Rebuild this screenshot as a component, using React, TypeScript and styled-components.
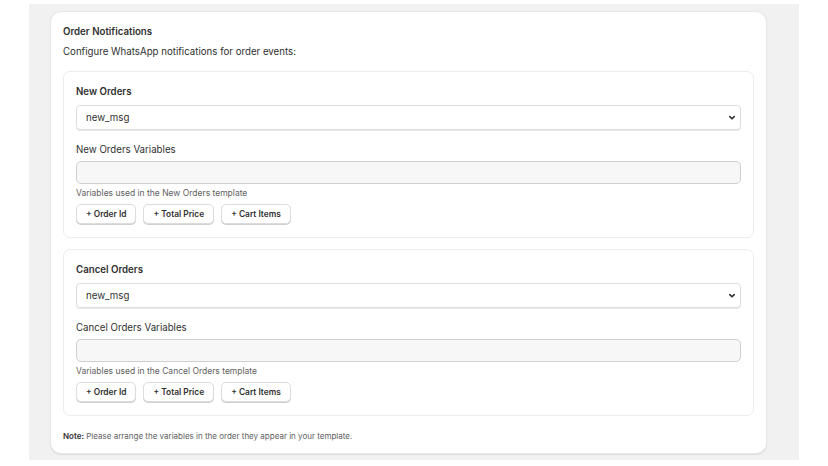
import React from 'react';
import styled, { createGlobalStyle } from 'styled-components';

const Global = createGlobalStyle`
  html, body { margin: 0; padding: 0; background: #ffffff; }
  body { font-family: Inter, "Noto Sans", sans-serif; color: #303030; }
`;

const Page = styled.div`
  margin: 4px 29px 0 29px;
  width: 770px;
  background: #f1f1f1;
  padding: 8px 33px 7px 22px;
  box-sizing: border-box;
`;

const Card = styled.div`
  background: #ffffff;
  border-radius: 10px;
  box-shadow: 0 0 0 1px #e8e8e8, 0 1px 1px 1px #dcdcdc;
  padding: 14px 12px 12px 12px;
  display: flex;
  flex-direction: column;
`;

const Title = styled.h2`
  margin: 0;
  font-size: 9.7px;
  font-weight: 600;
  line-height: 12px;
  color: #303030;
`;

const Intro = styled.p`
  margin: 8px 0 13px 0;
  font-size: 9.7px;
  line-height: 12px;
  color: #303030;
`;

const Section = styled.section`
  border: 1px solid #ececec;
  border-radius: 7px;
  padding: 14px 12px 13px 12px;
  display: flex;
  flex-direction: column;
  & + & { margin-top: 11px; }
`;

const SectionTitle = styled.h3`
  margin: 0 0 7px 0;
  font-size: 9.7px;
  font-weight: 600;
  line-height: 12px;
`;

const SelectBox = styled.div`
  height: 25px;
  border: 1px solid #dedede;
  border-radius: 4px;
  box-shadow: 0 1px 0 #e6e6e6;
  box-sizing: border-box;
  display: flex;
  align-items: center;
  justify-content: space-between;
  padding: 0 4px 0 9px;
  font-size: 9.7px;
  color: #303030;
`;

const Label = styled.div`
  margin: 14px 0 5px 0;
  font-size: 9.7px;
  line-height: 12px;
`;

const VarInput = styled.div`
  height: 23px;
  border: 1px solid #cfcfcf;
  border-radius: 5px;
  background: #f7f7f7;
  box-sizing: border-box;
`;

const Help = styled.div`
  margin: 4px 0 6px 0;
  font-size: 8.5px;
  line-height: 10px;
  color: #616161;
`;

const Chips = styled.div`
  display: flex;
  gap: 7px;
`;

const Chip = styled.button`
  font-family: Inter, "Noto Sans", sans-serif;
  height: 20px;
  padding: 0 9px;
  background: #ffffff;
  border: 1px solid #dcdcdc;
  border-radius: 5px;
  box-shadow: 0 1px 0 #cfcfcf;
  font-size: 8.4px;
  font-weight: 600;
  color: #303030;
  cursor: pointer;
`;

const Note = styled.p`
  margin: 15px 0 0 0;
  font-size: 8px;
  line-height: 10px;
  color: #616161;
  b { font-weight: 600; color: #303030; }
`;

const Chevron = () => (
  <svg width="8" height="6" viewBox="0 0 8 6">
    <path d="M1.8 1.6 L4 3.8 L6.2 1.6" fill="none" stroke="#303030" strokeWidth="1.6" strokeLinecap="round" strokeLinejoin="round" />
  </svg>
);

const OrderBlock: React.FC<{ name: string }> = ({ name }) => (
  <Section>
    <SectionTitle>{name}</SectionTitle>
    <SelectBox>
      <span>new_msg</span>
      <Chevron />
    </SelectBox>
    <Label>{name} Variables</Label>
    <VarInput />
    <Help>Variables used in the {name} template</Help>
    <Chips>
      <Chip>+ Order Id</Chip>
      <Chip>+ Total Price</Chip>
      <Chip>+ Cart Items</Chip>
    </Chips>
  </Section>
);

export default function App() {
  return (
    <>
      <Global />
      <Page>
        <Card>
          <Title>Order Notifications</Title>
          <Intro>Configure WhatsApp notifications for order events:</Intro>
          <OrderBlock name="New Orders" />
          <OrderBlock name="Cancel Orders" />
          <Note><b>Note:</b> Please arrange the variables in the order they appear in your template.</Note>
        </Card>
      </Page>
    </>
  );
}
